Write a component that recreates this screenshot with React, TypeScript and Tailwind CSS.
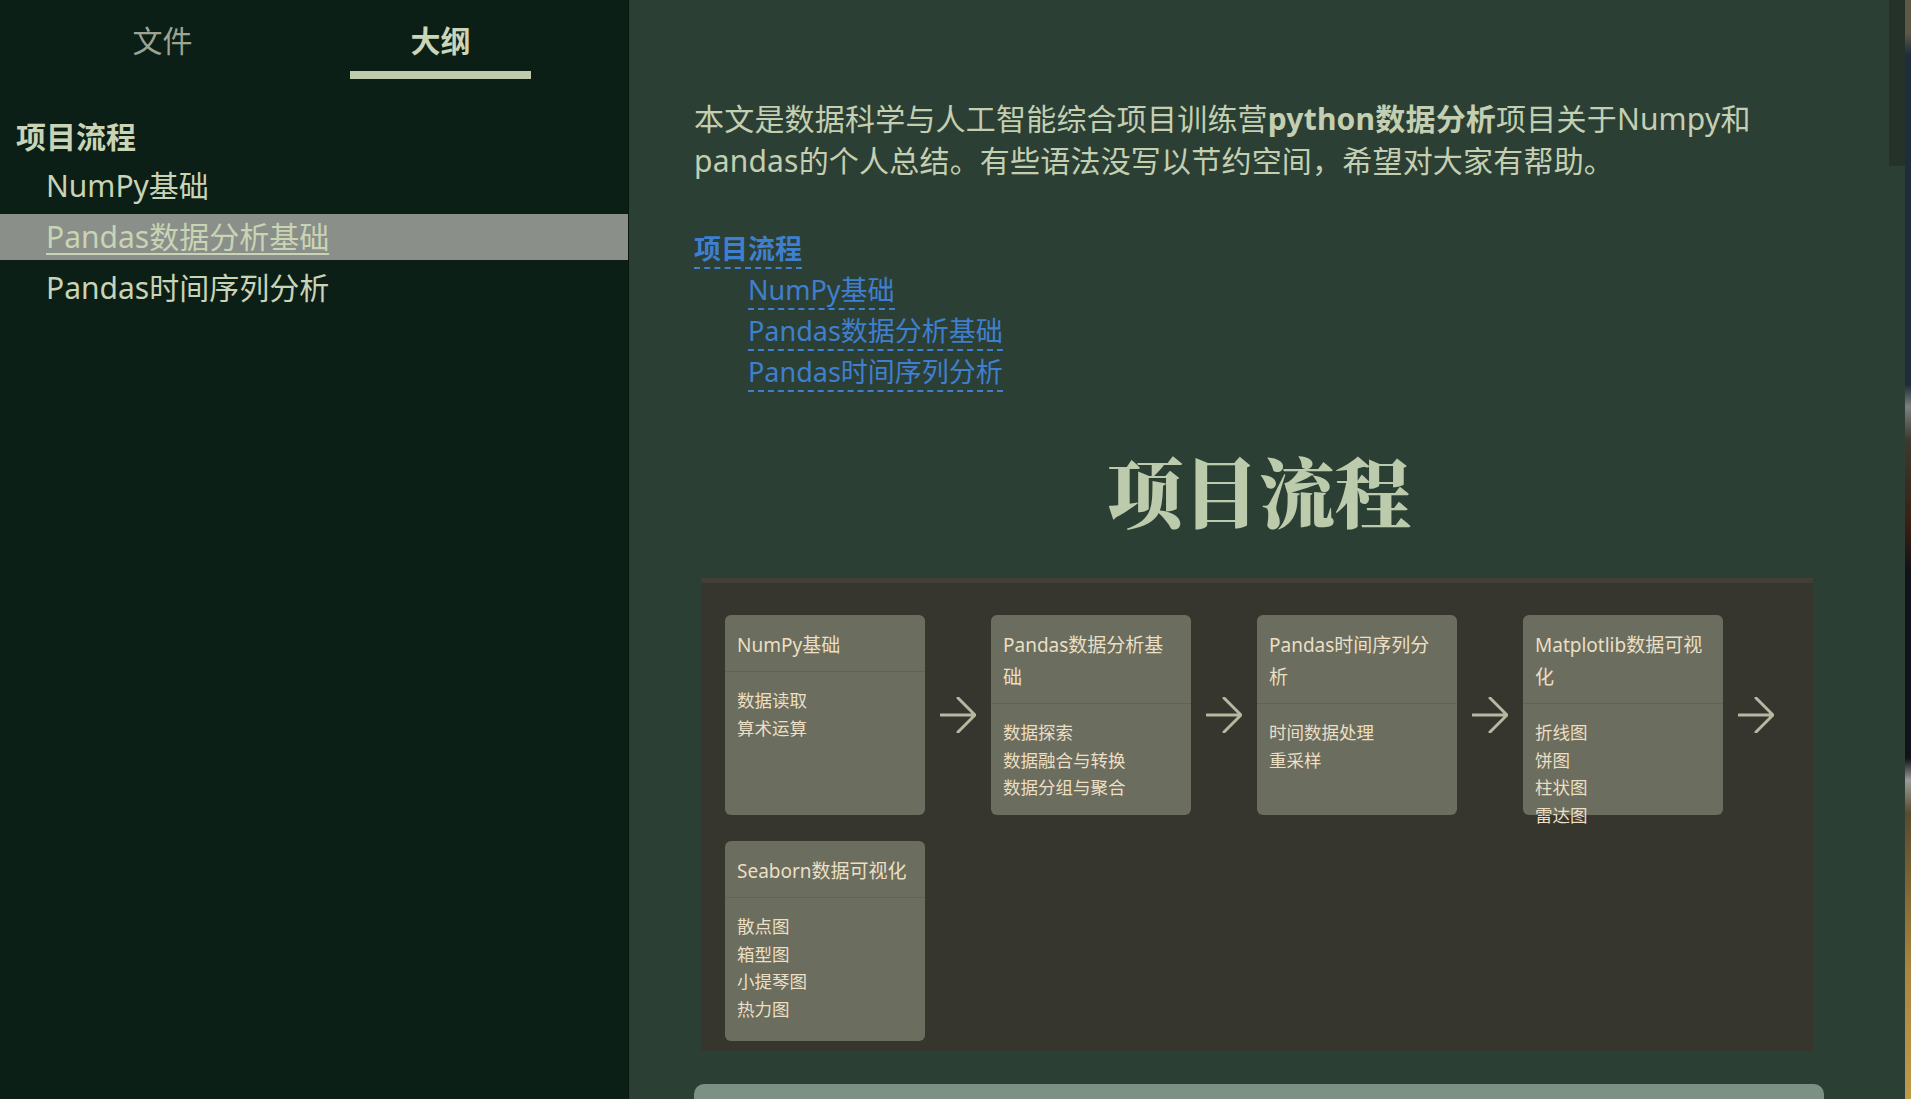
import React from "react";

const cards: { title: string[]; items: string[] }[] = [
  { title: ["NumPy基础"], items: ["数据读取", "算术运算"] },
  { title: ["Pandas数据分析基", "础"], items: ["数据探索", "数据融合与转换", "数据分组与聚合"] },
  { title: ["Pandas时间序列分", "析"], items: ["时间数据处理", "重采样"] },
  { title: ["Matplotlib数据可视", "化"], items: ["折线图", "饼图", "柱状图", "雷达图"] },
  { title: ["Seaborn数据可视化"], items: ["散点图", "箱型图", "小提琴图", "热力图"] },
];

function Arrow() {
  return (
    <svg width="36" height="36" viewBox="0 0 36 36" fill="none" stroke="#b7b8a2" strokeWidth="3" strokeLinecap="round" strokeLinejoin="round">
      <path d="M1 18H35M18 1L35 18L18 35" />
    </svg>
  );
}

function Card({ title, items }: { title: string[]; items: string[] }) {
  return (
    <div className="w-[200px] h-[200px] shrink-0 rounded-[6px] bg-[#6b6e5e] text-[#ecdfc4]">
      <div className="px-[12px] pt-[14px] pb-[10px] text-[19px] leading-[32px] border-b border-[#5f6254]">
        {title.map((t, i) => (
          <div key={i} className="whitespace-nowrap">{t}</div>
        ))}
      </div>
      <div className="px-[12px] pt-[15px] text-[17.5px] leading-[27.5px]">
        {items.map((t, i) => (
          <div key={i} className="whitespace-nowrap">{t}</div>
        ))}
      </div>
    </div>
  );
}

export default function App() {
  return (
    <div className="w-[1911px] h-[1099px] flex overflow-hidden font-['Noto_Sans','Noto_Sans_CJK_SC',sans-serif]">
      {/* Sidebar */}
      <div className="w-[629px] shrink-0 h-full bg-[#0c1f16] border-r border-[#08160f]">
        <div className="flex pl-[72px] gap-[97px]">
          <div className="w-[181px] flex flex-col items-center">
            <div className="pt-[21px] leading-[40px] text-[30px] text-[#9da493]">文件</div>
          </div>
          <div className="w-[181px] flex flex-col items-center">
            <div className="pt-[21px] leading-[40px] text-[30px] font-bold text-[#cbd5b7]">大纲</div>
            <div className="mt-[10px] w-full h-[8px] bg-[#bfcbad]"></div>
          </div>
        </div>
        <div className="mt-[35px] text-[30px] leading-[46px] text-[#c9d3b6]">
          <div className="pl-[16px] h-[46px] font-bold">项目流程</div>
          <div className="mt-[3px] pl-[46px] h-[46px]">NumPy基础</div>
          <div className="mt-[5px] pl-[46px] h-[46px] bg-[#8a8f8a] text-[#c8d4b3]">
            <span className="underline decoration-2 underline-offset-[5px]">Pandas数据分析基础</span>
          </div>
          <div className="mt-[5px] pl-[46px] h-[46px]">Pandas时间序列分析</div>
        </div>
      </div>

      {/* Main */}
      <div className="relative flex-1 h-full bg-[#2c3f35]">
        <div className="w-[1130px] ml-[65px] pt-[98px]">
          <p className="text-[30px] tracking-[0.2px] leading-[42px] text-[#c4cfb1]">
            本文是数据科学与人工智能综合项目训练营<strong className="font-bold">python数据分析</strong>项目关于Numpy和
            <br />
            pandas的个人总结。有些语法没写以节约空间，希望对大家有帮助。
          </p>

          <div className="mt-[49px] flex flex-col gap-[3px] text-[27px] leading-[36px] text-[#3f7fcf]">
            <div className="w-fit h-[38px] font-bold border-b-2 border-dashed border-[#3f7fcf]">项目流程</div>
            <div className="ml-[54px] w-fit h-[38px] border-b-2 border-dashed border-[#3f7fcf]">NumPy基础</div>
            <div className="ml-[54px] w-fit h-[38px] border-b-2 border-dashed border-[#3f7fcf]">Pandas数据分析基础</div>
            <div className="ml-[54px] w-fit h-[38px] border-b-2 border-dashed border-[#3f7fcf]">Pandas时间序列分析</div>
          </div>

          <h1 className="mt-[52px] text-center text-[76px] leading-[91px] font-black text-[#bccbab] font-['Noto_Serif_CJK_SC','Noto_Sans_CJK_SC',serif]">
            项目流程
          </h1>

          <div className="mt-[43px] ml-[7px] w-[1112px] h-[473px] bg-[#36362f] border-t-[5px] border-[#413f36] pl-[24px] pt-[32px]">
            <div className="flex flex-wrap gap-y-[26px]">
              {cards.map((c, i) => (
                <div key={i} className="flex items-center">
                  <Card title={c.title} items={c.items} />
                  {i < cards.length - 1 && (
                    <div className="w-[66px] flex justify-center">
                      <Arrow />
                    </div>
                  )}
                </div>
              ))}
            </div>
          </div>

          <div className="mt-[33px] h-[60px] rounded-t-[10px] bg-[#7d9084]"></div>
        </div>

        {/* scrollbar thumb */}
        <div className="absolute right-0 top-0 w-[16px] h-[166px] bg-[#24322a]"></div>
      </div>

      {/* desktop wallpaper sliver */}
      <div className="w-[6px] shrink-0 h-full bg-[linear-gradient(to_bottom,#5f5848_0%,#5f5848_3%,#1f2c3a_5%,#1f2c3a_35%,#7c8080_37%,#3d3a30_40%,#3a1e14_48%,#12121a_52%,#12121a_69%,#9b9b98_71%,#5a4a30_74%,#a8843e_88%,#c09a4a_100%)]"></div>
    </div>
  );
}
